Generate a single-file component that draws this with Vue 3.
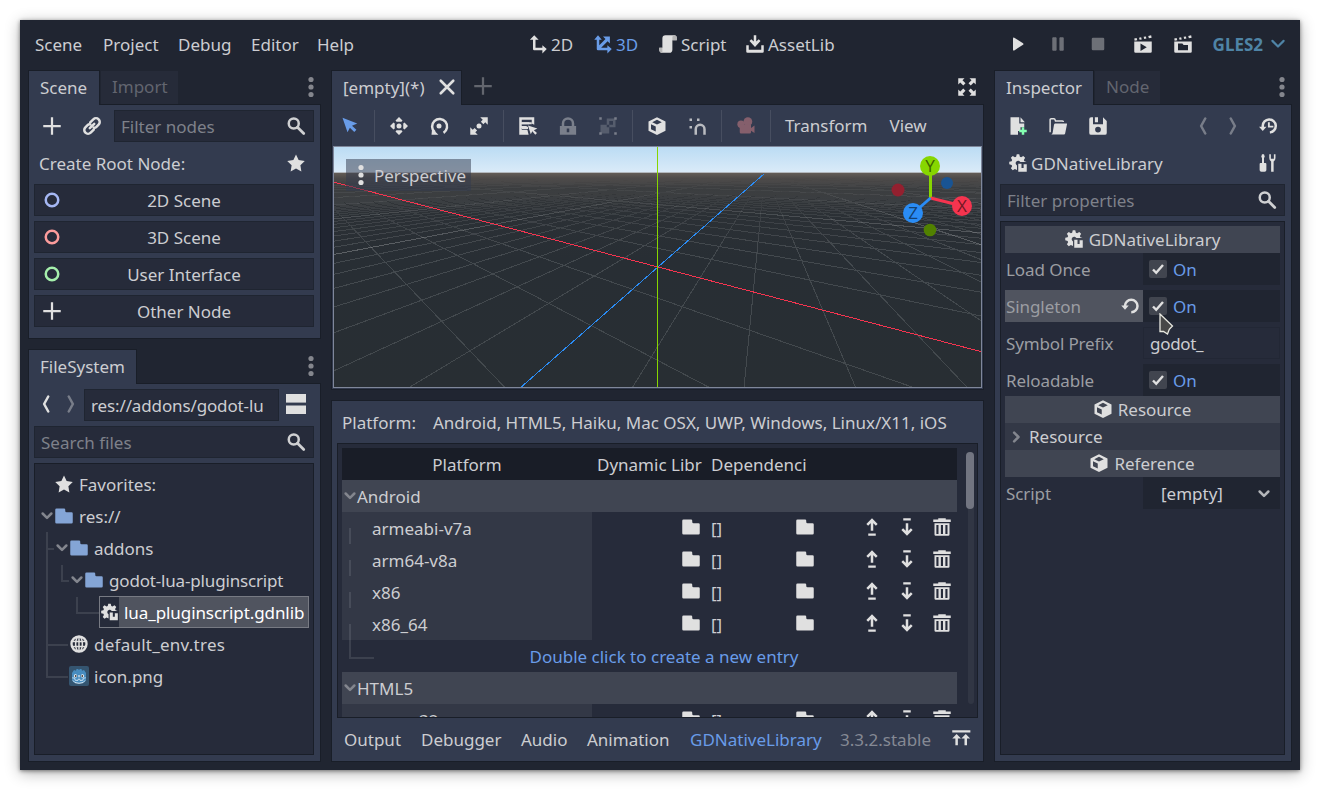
<script setup>
const menus = ['Scene', 'Project', 'Debug', 'Editor', 'Help']
const modes = [
  { label: '2D', icon: 'm2d' },
  { label: '3D', icon: 'm3d', active: true },
  { label: 'Script', icon: 'script' },
  { label: 'AssetLib', icon: 'asset' },
]
const roots = [
  { label: '2D Scene', icon: 'ring', color: '#a5b7f3' },
  { label: '3D Scene', icon: 'ring', color: '#fc9c9c' },
  { label: 'User Interface', icon: 'ring', color: '#a5efac' },
  { label: 'Other Node', icon: 'add', color: '#e0e0e0' },
]
const files = [
  { label: 'Favorites:', icon: 'star', level: 0, track: 0 },
  { label: 'res://', icon: 'folder', level: 0, open: true, dir: true, track: 0 },
  { label: 'addons', icon: 'folder', level: 1, open: true, dir: true, track: 0 },
  { label: 'godot-lua-pluginscript', icon: 'folder', level: 2, open: true, dir: true, track: -0.17 },
  { label: 'lua_pluginscript.gdnlib', icon: 'gdn', level: 3, selected: true, track: -0.08 },
  { label: 'default_env.tres', icon: 'globe', level: 1, track: 0.25 },
  { label: 'icon.png', icon: 'godot', level: 1, track: 0 },
]
const tools = [
  { icon: 'select', cls: 'accent first' }, null,
  { icon: 'move' }, { icon: 'rotate' }, { icon: 'scale' }, null,
  { icon: 'list' }, { icon: 'lock', cls: 'dim' }, { icon: 'group', cls: 'dim' }, null,
  { icon: 'cube' }, { icon: 'snap', cls: 'soft' }, null,
  { icon: 'camera', cls: 'cam' }, null,
]
const archs = ['armeabi-v7a', 'arm64-v8a', 'x86', 'x86_64']
const bottomTabs = ['Output', 'Debugger', 'Audio', 'Animation', 'GDNativeLibrary']

// Ground grid: orbit camera, distance 4, pitch and yaw 0.5 rad, 70 degree field of view.
const W = 647, H = 240
const f = H / 2 / Math.tan((35 * Math.PI) / 180)
const s = Math.sin(0.5), c = Math.cos(0.5)
function depth(x, z) { return 4 - (x * c * s + z * c * c) }
function project(x, z) {
  const d = depth(x, z)
  return [324 + (f * (x * c - z * s)) / d, 120 + (f * (x * s * s + z * s * c)) / d]
}
function segment(x0, z0, x1, z1) {
  const near = 0.2
  const d0 = depth(x0, z0), d1 = depth(x1, z1)
  if (d0 < near && d1 < near) return ''
  if (d1 < near) {
    const t = (d0 - near) / (d0 - d1)
    x1 = x0 + (x1 - x0) * t
    z1 = z0 + (z1 - z0) * t
  }
  const a = project(x0, z0), b = project(x1, z1)
  return `M${a[0].toFixed(1)} ${a[1].toFixed(1)}L${b[0].toFixed(1)} ${b[1].toFixed(1)}`
}
function gridPath(primary) {
  let out = ''
  const n = 64
  for (let i = -n; i <= n; i++) {
    if (i === 0 || (i % 8 === 0) !== primary) continue
    out += segment(i, -160, i, 160) + segment(-160, i, 160, i)
  }
  return out
}
const minor = gridPath(false)
const major = gridPath(true)
const axisX = segment(-2000, 0, 2000, 0)
const axisZ = segment(0, -2000, 0, 2000)
</script>

<template>
  <svg class="defs" width="0" height="0" aria-hidden="true">
    <symbol id="add" viewBox="0 0 16 16"><path d="M7.100 1v6.100H1v1.800h6.100V15h1.800V8.900H15V7.100H8.900V1z" /></symbol>
    <symbol id="link" viewBox="0 0 16 16"><g fill="none" stroke="currentColor" stroke-width="2" transform="rotate(-45 8 8)" stroke-linecap="round"><path d="M7 11H3.500a3 3 0 0 1 0-6H6q1.500 0 2 1.200" /><path d="M9 5h3.500a3 3 0 0 1 0 6H10q-1.500 0-2-1.200" /><path d="M5.500 8h5" /></g></symbol>
    <symbol id="search" viewBox="0 0 16 16"><g fill="none" stroke="currentColor"><circle cx="6.200" cy="6" r="4" stroke-width="2" /><path d="M9.200 9l5 5" stroke-width="2.200" stroke-linecap="round" /></g></symbol>
    <symbol id="star" viewBox="0 0 16 16"><path d="M8 1.200l2.100 4.400 4.900.8-3.500 3.400.8 4.900L8 12.400l-4.300 2.300.8-4.900L1 6.400l4.900-.8z" /></symbol>
    <symbol id="ring" viewBox="0 0 16 16"><circle cx="8" cy="8" r="5" fill="none" stroke="currentColor" stroke-width="2" /></symbol>
    <symbol id="folder" viewBox="0 0 16 16"><path d="M2 2a1 1 0 0 0-1 1v10a1 1 0 0 0 1 1h12a1 1 0 0 0 1-1V6a1 1 0 0 0-1-1h-4a1 1 0 0 1-1-1V3a1 1 0 0 0-1-1z" /></symbol>
    <symbol id="gdn" viewBox="0 0 16 16"><path d="M7 1l-.5 1.900-1 .4-1.700-1L2.300 3.800l1 1.700-.4 1L1 7v2l1.900.5.4 1-1 1.700 1.500 1.500 1.700-1 1.700.8V9.900A2 2 0 1 1 9.900 7.200H14.800L13.100 6.500l-.4-1 1-1.700-1.500-1.500-1.700 1-1-.4L9 1z" /><path d="M8.200 8.500h2.600V12h1.700V9H15v6H8.200z" /></symbol>
    <symbol id="globe" viewBox="0 0 16 16"><g fill="none" stroke="currentColor"><circle cx="8" cy="8" r="6" stroke-width="1.900" /><ellipse cx="8" cy="8" rx="2.700" ry="6" stroke-width="1.200" /><path d="M8 2v12M2 6h12M2 10h12" stroke-width="1.200" /></g></symbol>
    <symbol id="godot" viewBox="0 0 20 20"><rect width="20" height="20" rx="2" fill="#355570" /><path d="M3 7l2-3 2 .8.500-1.800h1.500l1 1 1-1h1.500l.5 1.800 2-.8 2 3v7q-1 3.500-7 3.500T3 14z" fill="#478cbf" /><path d="M3.200 11.800l2.500.4.400 2 2.700.3.500-1.400h1.400l.5 1.400 2.700-.3.400-2 2.500-.4" fill="none" stroke="#e8f2fa" stroke-width=".8" /><circle cx="6.500" cy="9.900" r="1.700" fill="#fff" /><circle cx="13.500" cy="9.900" r="1.700" fill="#fff" /><circle cx="6.700" cy="10" r="1" fill="#414042" /><circle cx="13.300" cy="10" r="1" fill="#414042" /><path d="M10 9v2.300" stroke="#fff" /><path d="M4 14.500q1 2.800 6 2.800t6-2.800" fill="none" stroke="#fff" stroke-width=".8" /></symbol>
    <symbol id="back" viewBox="0 0 16 16"><path d="M9.800 2L6.500 8l3.300 6" fill="none" stroke="currentColor" stroke-width="2" stroke-linejoin="round" stroke-linecap="round" /></symbol>
    <symbol id="fwd" viewBox="0 0 16 16"><path d="M6.200 2l3.300 6-3.300 6" fill="none" stroke="currentColor" stroke-width="2" stroke-linejoin="round" stroke-linecap="round" /></symbol>
    <symbol id="split" viewBox="0 0 20 20"><path d="M0 0h20v8H0zM0 11.500h20V20H0z" /><path d="M0 8h20v1H0z" opacity=".6" /></symbol>
    <symbol id="down" viewBox="0 0 16 16"><path d="M4.500 6l3.500 3.500L11.500 6" fill="none" stroke="currentColor" stroke-width="2" stroke-linecap="round" stroke-linejoin="round" /></symbol>
    <symbol id="right" viewBox="0 0 16 16"><path d="M6.500 4.500L10 8l-3.500 3.500" fill="none" stroke="currentColor" stroke-width="2" stroke-linecap="round" stroke-linejoin="round" /></symbol>
    <symbol id="wide" viewBox="0 0 16 16"><path d="M3.500 5.500L8 10l4.500-4.500" fill="none" stroke="currentColor" stroke-width="1.700" stroke-linecap="round" stroke-linejoin="round" /></symbol>
    <symbol id="dots" viewBox="0 0 16 22"><circle cx="8" cy="3.500" r="2.600" /><circle cx="8" cy="11" r="2.600" /><circle cx="8" cy="18.500" r="2.600" /></symbol>
    <symbol id="m2d" viewBox="0 0 16 16"><path d="M5 1L1.500 4.500H4V12a1 1 0 0 0 1 1h6.500v2.500L15 12l-3.500-3v2H6V4.500h2.500z" /></symbol>
    <symbol id="m3d" viewBox="0 0 16 16"><path d="M4 1L1 4.500h2V12a1 1 0 0 0 1 1h7.500v2.500L15 12l-3.500-3v2H6.500l5.200-5.200L13.500 7.500V2H8l2 2-5 5V4.500h2z" /></symbol>
    <symbol id="script" viewBox="0 0 16 16"><path d="M6 1a2.500 2.500 0 0 0-2.500 2.500V11H1v1.500A2.500 2.500 0 0 0 3.500 15H9a2.500 2.500 0 0 0 2.500-2.500V5H15V3a2 2 0 0 0-2-2z" /><path d="M1 11h2.500v4A2.500 2.500 0 0 1 1 12.500zM11.500 2.500V5H15V3a2 2 0 0 0-2-2 1.500 1.500 0 0 0-1.500 1.500" fill="#b4b4b4" /></symbol>
    <symbol id="asset" viewBox="0 0 16 16"><path d="M1 9h2v3.500h10V9h2v5a1 1 0 0 1-1 1H2a1 1 0 0 1-1-1z" /><path d="M7 1h2v5l2-1.800 1.400 1.400L8 10.300 3.600 5.600 5 4.200 7 6z" /></symbol>
    <symbol id="close" viewBox="0 0 16 16"><path d="M3 3l10 10M13 3L3 13" stroke="currentColor" stroke-width="2.100" stroke-linecap="round" /></symbol>
    <symbol id="expand" viewBox="0 0 16 16"><path d="M1 1h5L4.400 2.600 6.800 5 5 6.800 2.600 4.400 1 6zM15 1v5l-1.600-1.600L11 6.800 9.200 5l2.400-2.400L10 1zM1 15v-5l1.600 1.600L5 9.200 6.800 11l-2.400 2.400L6 15zM15 15h-5l1.600-1.600L9.200 11 11 9.200l2.400 2.400L15 10z" /></symbol>
    <symbol id="select" viewBox="0 0 16 16"><path d="M2 1.300l4 11.700 1.900-3.600 3.500 3.300 1.700-1.700-3.500-3.300L13.800 6z" /></symbol>
    <symbol id="move" viewBox="0 0 16 16"><circle cx="8" cy="8" r="2" /><path d="M8 .8L5.200 3.600 6 4.600h4l.8-1zM8 15.200l-2.800-2.800.8-1h4l.8 1zM.8 8l2.800-2.800 1 .8v4l-1 .8zM15.200 8l-2.800-2.800-1 .8v4l1 .8z" /></symbol>
    <symbol id="rotate" viewBox="0 0 16 16"><path d="M5 13.200a6 6 0 1 1 7 0" fill="none" stroke="currentColor" stroke-width="2" transform="rotate(4 8 8)" /><circle cx="8" cy="8" r="2" /><path d="M2 15l.5-5 5 5z" /></symbol>
    <symbol id="scale" viewBox="0 0 16 16"><circle cx="8" cy="8" r="2" /><path d="M9 1h6v6l-2-2-1.500 1.500-2-2L11 3zM7 15H1V9l2 2 1.500-1.500 2 2L5 13z" /></symbol>
    <symbol id="list" viewBox="0 0 16 16"><path d="M1 1h12v6l-2-1V3H3v2h6v1.500H3V8h4v1.500H3V11h4.500l1 4H1z" /><path d="M3 5h8v1.600H3zM3 8.600h5v1.700H3z" /><path d="M8 7.500l2.200 7 1.300-2.300L13.800 15l1.400-1.400-2.500-2.300L15.500 10z" /></symbol>
    <symbol id="lock" viewBox="0 0 16 16"><path d="M8 1a5 5 0 0 0-5 5v2H1.500v7h13V8H13V6a5 5 0 0 0-5-5m0 2a3 3 0 0 1 3 3v2H5V6a3 3 0 0 1 3-3m-1 7h2v3H7z" fill-rule="evenodd" /></symbol>
    <symbol id="group" viewBox="0 0 16 16"><g opacity=".5"><path d="M7 2h7v7H9V7H7zM9 4v3h3V4zM2 7h5v2h2v5H2z" fill-rule="evenodd" /></g><path d="M1 1h2v2H1zM13 1h2v2h-2zM1 13h2v2H1zM13 13h2v2h-2z" /></symbol>
    <symbol id="cube" viewBox="0 0 16 16"><path d="M8 .9L1.200 4.300v7.400L8 15.100l6.800-3.400V4.300zM8 3l3.800 1.900L8 6.800 4.200 4.900zM3.200 6.500L7 8.400v4L3.200 10.500z" fill-rule="evenodd" /></symbol>
    <symbol id="snap" viewBox="0 0 16 16"><path d="M2 2h2v2H2zM8 2h2v2H8zM2 8h2v2H2z" /><path d="M7 15v-4.500a3.500 3.500 0 0 1 7 0V15" fill="none" stroke="currentColor" stroke-width="2" /></symbol>
    <symbol id="camera" viewBox="0 0 16 16"><circle cx="9.500" cy="4.500" r="3.500" /><circle cx="4" cy="6.500" r="2.900" /><path d="M3 7h9v2.500l2.800-2v6L12 11.700V13a1 1 0 0 1-1 1H4a1 1 0 0 1-1-1z" /></symbol>
    <symbol id="play" viewBox="0 0 16 16"><path d="M4 12.500V3.500q0-1 1-.6l7 4.500q.8.600 0 1.200l-7 4.500Q4 13.500 4 12.500" /></symbol>
    <symbol id="pause" viewBox="0 0 16 16"><path d="M3.800 3h2.700v10H3.800zM9.500 3h2.700v10H9.500z" stroke="currentColor" stroke-linejoin="round" stroke-width=".7" /></symbol>
    <symbol id="stop" viewBox="0 0 16 16"><rect x="3" y="3" width="10" height="10" rx="1" /></symbol>
    <symbol id="clap" viewBox="0 0 16 16"><path d="M1 3.600l1.900-.4.500 1.700L1.300 5.300zM4.800 2.900l1.700-.3.500 1.700-1.700.3zM8.500 2.200l1.800-.3.400 1.700-1.700.3zM12.200 1.500L14.500 1l.4 1.900-2.200.4z" /><path d="M1 6h14v8a1 1 0 0 1-1 1H2a1 1 0 0 1-1-1zM6 7.500v6l5-3z" fill-rule="evenodd" /></symbol>
    <symbol id="clap2" viewBox="0 0 16 16"><path d="M1 3.600l1.900-.4.500 1.700L1.300 5.300zM4.800 2.900l1.700-.3.500 1.700-1.700.3zM8.500 2.200l1.800-.3.400 1.700-1.700.3zM12.200 1.500L14.500 1l.4 1.900-2.200.4z" /><path d="M1 6h14v8a1 1 0 0 1-1 1H2a1 1 0 0 1-1-1zM4 7.500V13h8V8.700H8.500L7.500 7.500z" fill-rule="evenodd" /></symbol>
    <symbol id="newres" viewBox="0 0 16 16"><path d="M2 1v14h6v-3h2V9h3V6H9V1zM10 1v4h3.500z" /><path d="M11 9h2v2h2v2h-2v2h-2v-2H9v-2h2z" fill="#84ffb1" /></symbol>
    <symbol id="load" viewBox="0 0 16 16"><path d="M1.700 13V3q0-.9.900-.9h2.200q.7 0 .9.900l.3 1h5.500q.8 0 .8.800" fill="none" stroke="currentColor" stroke-width="1.200" /><path d="M5.800 6H15q.3 0 .2.500L13.700 14q-.2.800-.9.800H2.500q.9-.3 1.200-1.500L4.800 7q.2-1 1-1" /></symbol>
    <symbol id="save" viewBox="0 0 16 16"><path d="M2.500 1A1.500 1.500 0 0 0 1 2.500v11A1.500 1.500 0 0 0 2.500 15h11a1.500 1.500 0 0 0 1.500-1.500V4l-3-3v5.500H4V1zm3 0v4H8V1zM8 8.500a2.300 2.300 0 1 1 0 4.600 2.300 2.300 0 0 1 0-4.600" fill-rule="evenodd" /></symbol>
    <symbol id="history" viewBox="0 0 16 16"><path d="M3.800 9V8a5.200 5.200 0 1 1 5.700 5.100" fill="none" stroke="currentColor" stroke-width="2" /><path d="M.8 8.500h6L3.800 12z" /><path d="M8.700 5v3.500h3.600" fill="none" stroke="currentColor" stroke-width="1.500" /></symbol>
    <symbol id="revert" viewBox="0 0 16 16"><path d="M4 8a5 5 0 1 1 5 5" fill="none" stroke="currentColor" stroke-width="2" /><path d="M1 7.500h6L4 11z" /></symbol>
    <symbol id="tools" viewBox="0 0 16 16"><path d="M3.200 1h1.600l.6 2-.6 1v4H6q.7 0 .7.900v4.600Q6.700 15 4 15t-2.700-1.500V8.900q0-.9.700-.9h1.200V4l-.6-1zM9 1v3q0 2 1.500 2.700V15h2V6.700Q14 6 14 4V1h-1.300v3.500h-2.400V1z" /></symbol>
    <symbol id="up" viewBox="0 0 16 16"><path d="M8 11V3M4.200 6.300L8 2.500l3.800 3.800" fill="none" stroke="currentColor" stroke-width="2" /><path d="M5 13.200h6V15H5z" /></symbol>
    <symbol id="dn" viewBox="0 0 16 16"><path d="M8 5v8M4.200 9.700L8 13.500l3.800-3.800" fill="none" stroke="currentColor" stroke-width="2" /><path d="M5 1h6v1.800H5z" /></symbol>
    <symbol id="trash" viewBox="0 0 16 16"><path d="M5 1h6v1h4v2H1V2h4z" /><path d="M2 5h12v9a1 1 0 0 1-1 1H3a1 1 0 0 1-1-1zM3.500 6.300v7.200h1.700V6.300zM7.100 6.300v7.200h1.700V6.300zM10.700 6.300v7.200h1.700V6.300z" fill-rule="evenodd" /></symbol>
    <symbol id="raise" viewBox="0 0 16 16"><path d="M1 1h14.500v1.800H1zM4.500 4L8 7.500H5.500V13h-2V7.500H1zM11.800 4l3.500 3.500h-2.500V13h-2V7.500H8.300z" /></symbol>
    <symbol id="check" viewBox="0 0 18 18"><rect width="18" height="18" rx="2" fill="#41454f" /><path d="M4 9.500l3.200 3.300L14 5" fill="none" stroke="#e0e0e0" stroke-width="2.400" /></symbol>
  </svg>

  <div class="window">
    <header class="menubar">
      <nav class="menus"><span v-for="m in menus" :key="m">{{ m }}</span></nav>
      <nav class="modes">
        <span v-for="m in modes" :key="m.label" class="mode" :class="{ accent: m.active }">
          <svg class="i"><use :href="'#' + m.icon" /></svg>{{ m.label }}
        </span>
      </nav>
      <div class="run">
        <svg class="i"><use href="#play" /></svg>
        <svg class="i off"><use href="#pause" /></svg>
        <svg class="i off"><use href="#stop" /></svg>
        <svg class="i clap"><use href="#clap" /></svg>
        <svg class="i"><use href="#clap2" /></svg>
        <span class="driver">GLES2<svg class="i"><use href="#wide" /></svg></span>
      </div>
    </header>

    <main class="docks">
      <div class="left">
        <section class="dock scene-dock">
          <div class="tabs">
            <span class="tab on w-scene">Scene</span><span class="tab w-import">Import</span>
            <svg class="dots"><use href="#dots" /></svg>
          </div>
          <div class="panel stack">
            <div class="row">
              <span class="tool"><svg class="i"><use href="#add" /></svg></span>
              <span class="tool"><svg class="i"><use href="#link" /></svg></span>
              <div class="field hint">Filter nodes<svg class="i"><use href="#search" /></svg></div>
            </div>
            <div class="row label-row">Create Root Node:<svg class="i"><use href="#star" /></svg></div>
            <div v-for="r in roots" :key="r.label" class="field button">
              <svg class="i" :style="{ color: r.color }"><use :href="'#' + r.icon" /></svg><span>{{ r.label }}</span>
            </div>
          </div>
        </section>
        <section class="dock fs-dock">
          <div class="tabs">
            <span class="tab on w-fs">FileSystem</span>
            <svg class="dots"><use href="#dots" /></svg>
          </div>
          <div class="panel stack">
            <div class="row path-row">
              <svg class="i"><use href="#back" /></svg>
              <svg class="i off"><use href="#fwd" /></svg>
              <div class="field path">res://addons/godot-lu</div>
              <svg class="i split"><use href="#split" /></svg>
            </div>
            <div class="field hint">Search files<svg class="i"><use href="#search" /></svg></div>
            <div class="tree">
              <svg class="guides" width="80" height="160">
                <path d="M13 63v146M12 80h8M28 96v16h7M43 128v16h22M12 176h22M12 208h22" />
              </svg>
              <div v-for="n in files" :key="n.label" class="node" :style="{ '--level': n.level, letterSpacing: n.track + 'px' }">
                <svg class="i arrow" :class="{ shown: n.open }"><use href="#down" /></svg>
                <span class="item" :class="{ selected: n.selected }">
                  <svg class="i" :class="{ dir: n.dir }"><use :href="'#' + n.icon" /></svg>
                  <span class="name">{{ n.label }}</span>
                </span>
              </div>
            </div>
          </div>
        </section>
      </div>

      <div class="center">
        <section class="dock view-dock">
          <div class="tabs">
            <span class="tab on scene-tab">[empty](*)<svg class="i"><use href="#close" /></svg></span>
            <svg class="i plus"><use href="#add" /></svg>
            <svg class="i expand"><use href="#expand" /></svg>
          </div>
          <div class="panel view-panel">
            <div class="toolbar">
              <template v-for="(t, k) in tools" :key="k">
                <span v-if="t" class="cell" :class="t.cls"><svg class="i"><use :href="'#' + t.icon" /></svg></span>
                <span v-else class="sep"></span>
              </template>
              <span class="tmenu">Transform</span><span>View</span>
            </div>
            <div class="viewport">
              <svg :width="W" :height="H" :viewBox="`0 0 ${W} ${H}`">
                <defs>
                  <linearGradient id="sky" x2="0" y2="1"><stop offset="0" stop-color="#bbdcf4" /><stop offset="1" stop-color="#dbebf8" /></linearGradient>
                  <linearGradient id="ground" x2="0" y2="1">
                    <stop offset="0" stop-color="#635c56" /><stop offset=".025" stop-color="#4d4a49" />
                    <stop offset=".07" stop-color="#37393b" /><stop offset=".2" stop-color="#2b3035" />
                    <stop offset=".4" stop-color="#282e34" /><stop offset="1" stop-color="#282e33" />
                  </linearGradient>
                  <linearGradient id="fade" gradientUnits="userSpaceOnUse" x1="0" y1="30" x2="0" y2="100">
                    <stop offset="0" stop-color="#000" /><stop offset=".2" stop-color="#3a3a3a" /><stop offset=".6" stop-color="#aaa" /><stop offset="1" stop-color="#fff" />
                  </linearGradient>
                  <mask id="haze" maskUnits="userSpaceOnUse" x="0" y="0" width="647" height="240"><rect width="647" height="240" fill="url(#fade)" /></mask>
                </defs>
                <rect width="647" height="26" fill="url(#sky)" />
                <rect y="26" width="647" height="214" fill="url(#ground)" />
                <rect y="25" width="647" height="1" fill="#b3b8bd" />
                <g mask="url(#haze)" fill="none" shape-rendering="crispEdges">
                  <path :d="minor" stroke="#fff" stroke-opacity=".13" />
                  <path :d="major" stroke="#fff" stroke-opacity=".24" />
                </g>
                <g fill="none" shape-rendering="crispEdges">
                  <path :d="axisX" stroke="#f5344f" /><path :d="axisZ" stroke="#2a8cf5" />
                  <path d="M323.500 0v240" stroke="#87d600" />
                </g>
                <g class="gizmo" transform="translate(-.5 0)">
                  <path d="M597 51V19" stroke="#87d600" stroke-width="3" /><path d="M597 51l32 8" stroke="#f5344f" stroke-width="3" /><path d="M597 51l-17 15" stroke="#2a8cf5" stroke-width="3" />
                  <circle cx="564.500" cy="43" r="6.500" fill="#93202f" /><circle cx="613.500" cy="36" r="6" fill="#195493" /><circle cx="596.500" cy="83" r="6.300" fill="#518100" />
                  <circle cx="596.500" cy="19" r="10" fill="#87d600" /><circle cx="628.500" cy="59" r="10" fill="#f5344f" /><circle cx="579.500" cy="66" r="10" fill="#2a8cf5" />
                  <text x="596.500" y="25">Y</text><text x="628.500" y="65">X</text><text x="579.500" y="72">Z</text>
                </g>
              </svg>
              <div class="persp"><svg class="dots"><use href="#dots" /></svg>Perspective</div>
            </div>
          </div>
        </section>

        <section class="panel bottom">
          <div class="platforms"><span>Platform:</span><span class="plist">Android, HTML5, Haiku, Mac OSX, UWP, Windows, Linux/X11, iOS</span></div>
          <div class="table">
            <div class="rows">
              <div class="trow head"><span>Platform</span><span class="l">Dynamic Libr</span><span class="l">Dependenci</span></div>
              <div class="group-row"><svg class="i"><use href="#down" /></svg>Android</div>
              <div v-for="a in archs" :key="a" class="trow">
                <span class="arch">{{ a }}</span>
                <span class="lib"><svg class="i"><use href="#folder" /></svg></span>
                <span class="lib dep"><span>[]</span><svg class="i"><use href="#folder" /></svg></span>
                <span class="acts"><svg class="i"><use href="#up" /></svg><svg class="i"><use href="#dn" /></svg><svg class="i"><use href="#trash" /></svg></span>
              </div>
              <div class="create accent">Double click to create a new entry</div>
              <div class="group-row"><svg class="i"><use href="#down" /></svg>HTML5</div>
              <div class="trow">
                <span class="arch wasm">wasm32</span>
                <span class="lib"><svg class="i"><use href="#folder" /></svg></span>
                <span class="lib dep"><span>[]</span><svg class="i"><use href="#folder" /></svg></span>
                <span class="acts"><svg class="i"><use href="#up" /></svg><svg class="i"><use href="#dn" /></svg><svg class="i"><use href="#trash" /></svg></span>
              </div>
            </div>
            <div class="scroll"><div class="thumb"></div></div>
          </div>
          <footer class="btabs">
            <span v-for="t in bottomTabs" :key="t" :class="{ accent: t === 'GDNativeLibrary' }">{{ t }}</span>
            <span class="ver">3.3.2.stable</span>
            <svg class="i raise"><use href="#raise" /></svg>
          </footer>
        </section>
      </div>

      <section class="dock inspector">
        <div class="tabs">
          <span class="tab on w-insp">Inspector</span><span class="tab w-node">Node</span>
          <svg class="dots"><use href="#dots" /></svg>
        </div>
        <div class="panel stack">
          <div class="row itools">
            <svg class="i"><use href="#newres" /></svg><svg class="i"><use href="#load" /></svg><svg class="i"><use href="#save" /></svg>
            <svg class="i off nav"><use href="#back" /></svg><svg class="i off"><use href="#fwd" /></svg><svg class="i"><use href="#history" /></svg>
          </div>
          <div class="row object"><svg class="i"><use href="#gdn" /></svg>GDNativeLibrary<svg class="i end"><use href="#tools" /></svg></div>
          <div class="field hint">Filter properties<svg class="i"><use href="#search" /></svg></div>
          <div class="props">
            <div class="cat"><svg class="i"><use href="#gdn" /></svg>GDNativeLibrary</div>
            <div class="prop"><span>Load Once</span><div class="val bool"><svg class="chk"><use href="#check" /></svg>On</div></div>
            <div class="prop hover gap"><span>Singleton<svg class="i"><use href="#revert" /></svg></span><div class="val bool"><svg class="chk"><use href="#check" /></svg>On
              <svg class="cursor" width="16" height="23"><path d="M1 1v17.500h3.500l4 2.500 1.800-4.700L13.500 13z" fill="#484848" stroke="#e8e8e0" stroke-width="1.300" /></svg></div></div>
            <div class="prop gap"><span class="tight">Symbol Prefix</span><div class="val text">godot_</div></div>
            <div class="prop gap"><span>Reloadable</span><div class="val bool"><svg class="chk"><use href="#check" /></svg>On</div></div>
            <div class="cat"><svg class="i"><use href="#cube" /></svg>Resource</div>
            <div class="sub"><svg class="i"><use href="#right" /></svg>Resource</div>
            <div class="cat"><svg class="i"><use href="#cube" /></svg>Reference</div>
            <div class="prop"><span>Script</span><div class="val drop">[empty]<svg class="i"><use href="#down" /></svg></div></div>
          </div>
        </div>
      </section>
    </main>
  </div>
</template>

<style>
body { background: #fff; overflow: hidden; }
#app { display: flow-root; }
</style>

<style scoped>
* { box-sizing: border-box; }
.defs { position: absolute; }
.window {
  width: 1280px; height: 750px; margin: 20px; background: #202531; color: #cccdd1;
  font: 17px/24px "Noto Sans", sans-serif; white-space: nowrap; cursor: default;
  box-shadow: 0 1px 4px rgba(0,0,0,.45), 0 3px 14px rgba(0,0,0,.3);
}
svg { display: block; flex: none; fill: currentColor; }
.i { width: 20px; height: 20px; color: #e0e0e0; }
.accent, .accent .i { color: #699ce8; }
.i.off { opacity: .4; }
.dots { width: 16px; height: 22px; color: #84868d; }

.menubar { height: 50px; display: flex; align-items: center; }
.menus { display: grid; grid-template-columns: 68px 75px 73px 66px auto; padding-left: 15px; width: 508px; }
.modes { display: grid; grid-template-columns: 65px 65px 87px auto; }
.mode { display: flex; align-items: center; gap: 3px; }
.mode .i { margin-top: -2px; }
.run { display: flex; align-items: center; gap: 20px; margin-left: auto; margin-right: 12px; }
.run > .i { margin-top: -2px; }
.clap { margin-left: 5px; }
.driver { display: flex; align-items: center; gap: 5px; font-weight: 700; color: #4f84a6; }
.driver .i { color: #4f84a6; margin-top: -2px; }

.docks { display: grid; grid-template-columns: 293px 653px 298px; gap: 10px; padding: 0 8px; height: 692px; }
.left { display: grid; grid-template-rows: 269px 413px; gap: 10px; }
.center { display: grid; grid-template-rows: 320px 362px; gap: 10px; }
.dock { display: flex; flex-direction: column; min-height: 0; }
.tabs { height: 35px; display: flex; margin-bottom: -1px; position: relative; z-index: 1; flex: none; align-items: flex-start; }
.tab { height: 33px; margin-top: 1px; margin-left: 1px; padding: 4px 11px 0; background: #262b39; color: #62656f; }
.tab.on { height: 35px; margin: 0; padding: 5px 11px 0; background: #333b4f; color: #cccdd1; border: 1px solid #191e28; border-bottom: 0; }
.w-scene { width: 72px; }
.w-import { width: 77px; }
.w-fs { width: 109px; }
.w-insp { width: 100px; }
.w-node { width: 65px; }
.tabs .dots { margin: 6px 2px 0 auto; }
.panel { background: #333b4f; border: 1px solid #191e28; flex: 1; min-height: 0; }
.stack { display: flex; flex-direction: column; gap: 5px; padding: 5px 6px 6px 5px; }
.row { height: 32px; display: flex; align-items: center; flex: none; }
.field { height: 32px; flex: none; background: #262b3a; border: 1px solid #1f2531; display: flex; align-items: center; padding: 1px 6px 0; }
.hint { color: #7e818a; }
.hint .i { margin: -2px 1px 0 auto; color: #cfd0d2; }
.row .field { flex: 1; }
.tool { width: 40px; padding-left: 7.500px; }
.label-row { padding: 2px 8px 0 5px; }
.label-row .i { margin: -3px 0 0 auto; }
.button { display: grid; grid-template-columns: 20px 1fr; }
.button span { text-align: center; padding-right: 0; }
.button .i { margin: -1px 0 0 .5px; }

.path-row .i:first-child { margin-left: 2px; }
.path-row .i.off { margin-left: 5px; margin-right: 3px; }
.path-row .split { margin: 0 8px 0 7px; }
.path-row > .i { margin-top: -2px; }
.path { letter-spacing: -.13px; padding-top: 2px; }
.tree { flex: 1; background: #262b3a; border: 1px solid #191e28; padding-top: 4px; position: relative; }
.guides { position: absolute; left: -1px; top: 5px; height: 220px; fill: none; stroke: #3c414e; stroke-width: 2; }
.node { height: 32px; display: flex; align-items: center; padding-left: calc(2px + 15px * var(--level)); position: relative; }
.arrow { visibility: hidden; color: #83868e; margin-left: -.5px; margin-right: -2.500px; }
.arrow.shown { visibility: visible; }
.item { display: flex; align-items: center; height: 32px; }
.dir { color: #84a5d6; }
.name { padding: 2px 0 0 5px; }
.selected { background: #50545f; box-shadow: inset 0 0 0 1px #777a83; color: #fff; padding-right: 5px; width: 210px; }
.selected .i { background: #262b3a; height: 30px; padding: 5px 0; margin-left: 1px; width: 19px; }

.scene-tab { display: flex; gap: 12px; padding-right: 5px !important; width: 131px; }
.scene-tab .i { margin-top: 1px; }
.plus { margin: 6px 0 0 10.500px; opacity: .35; }
.expand { margin: 7px 7.500px 0 auto; }
.view-panel { padding: 5px 1px 1px; }
.toolbar { height: 32px; display: flex; align-items: center; padding-left: 1px; }
.toolbar .i { margin-top: -1px; }
.cell { width: 40px; display: flex; justify-content: center; }
.cell.first { width: 32px; margin-right: 4px; }
.sep { width: 1px; height: 32px; margin: 0 4px; background: #474e60; }
.dim .i { color: #7a7f8b; }
.soft .i { color: #b9bbc0; }
.cam .i { color: #855f6c; }
.tmenu { margin: 0 22px 0 10px; }
.viewport { margin-top: 4px; height: 242px; border: 1px solid #7f879a; position: relative; }
.persp { position: absolute; left: 12px; top: 12px; width: 125px; height: 32px; display: flex; align-items: center; background: rgba(51,59,79,.52); color: #cccdd1; padding: 1px 0 0 7px; }
.persp .dots { color: #e0e0e0; margin: -2px 5px 0 0; }
.gizmo text { font: 17px "Noto Sans", sans-serif; fill: #000; fill-opacity: .55; text-anchor: middle; }

.bottom { display: flex; flex-direction: column; padding: 5px; }
.platforms { height: 37px; padding: 5px 5px 0; display: grid; grid-template-columns: 91px auto; }
.table { height: 275px; width: 641px; border: 1px solid #191e28; background: #262b3a; padding: 4px 2px 0 4px; display: flex; overflow: hidden; flex: none; }
.rows { width: 615px; }
.trow { height: 32px; display: grid; grid-template-columns: 250px 114px 114px 137px; align-items: center; }
.head { background: #191d27; text-align: center; padding-top: 2px; }
.head .l { text-align: left; padding-left: 5px; }
.group-row { height: 32px; background: #404552; display: flex; align-items: center; padding: 2px 0 0; }
.group-row .i { color: #83868e; margin: -3px -2.500px 0 -2.500px; }
.arch { height: 32px; background: #333846; padding: 5px 0 0 30px; position: relative; }
.arch::before { content: ""; position: absolute; left: 7px; top: 16px; width: 2px; height: 16px; background: #474c59; }
.wasm::before { display: none; }
.lib { display: flex; justify-content: flex-end; align-items: center; padding-right: 5px; }
.dep span { margin: 2px auto 0 5px; }
.lib .i, .acts .i { margin-top: -3px; }
.acts { display: flex; justify-content: flex-end; gap: 15px; padding-right: 5px; }
.create { height: 32px; padding: 5px 0 0 29px; text-align: center; position: relative; }
.create::before { content: ""; position: absolute; left: 7px; top: 0; width: 23px; height: 17px; border: solid #3c414e; border-width: 0 0 2px 2px; }
.scroll { width: 6px; height: 252px; margin: 4px 0 0 11px; background: #313644; border-radius: 3px; }
.thumb { width: 8px; height: 57px; margin-left: -2px; background: #727581; border-radius: 4px; }
.btabs { display: grid; grid-template-columns: 77px 100px 66px 103px 150px 111px 20px; padding: 10px 0 0 7px; }
.ver { color: #858994; }
.raise { margin: 1px 0 0 -.5px; }

.itools .i { margin-left: 7.500px; }
.itools .i + .i { margin-left: 20px; }
.itools .i.nav { margin-left: auto; }
.itools .nav + .i { margin-left: 10px; }
.itools .i:last-child { margin: 0 7.500px 0 15px; }
.object { padding: 2px 7.500px 0 7.500px; gap: 3.500px; }
.object .i { margin-top: -2px; }
.object .end { margin-left: auto; }
.props { flex: 1; background: #262b3a; border: 1px solid #191e28; padding: 4px; }
.cat { height: 27px; background: #404552; display: flex; align-items: center; justify-content: center; gap: 5px; padding: 1px 1px 0 0; }
.cat .i { margin-top: -2px; }
.prop { height: 32px; display: grid; grid-template-columns: 138px 137px; color: #9b9da2; }
.prop > span { padding: 5px 3px 0 1px; display: flex; justify-content: space-between; letter-spacing: -.08px; }
.prop > .tight { letter-spacing: -.15px; }
.gap { margin-top: 5px; }
.hover > span { background: #50545f; }
.hover .i { margin-top: 1px; }
.val { background: #202531; display: flex; align-items: center; position: relative; padding-top: 1px; }
.hover .val { z-index: 2; }
.bool { color: #699ce8; gap: 6px; padding-left: 6px; }
.chk { width: 18px; height: 18px; margin-top: -2px; }
.text { background: #262b3a; border: 1px solid #222735; color: #cccdd1; padding-left: 6px; letter-spacing: -.3px; }
.drop { color: #cccdd1; padding-left: 18px; }
.drop .i { margin-left: auto; margin-right: 6px; color: #b4b6ba; }
.sub { height: 27px; background: #333846; display: flex; align-items: center; color: #cccdd1; gap: 3px; padding: 1px 0 0 1px; }
.sub .i { color: #83868e; margin-top: -1px; }
.cursor { position: absolute; left: 16px; top: 23px; }
</style>
